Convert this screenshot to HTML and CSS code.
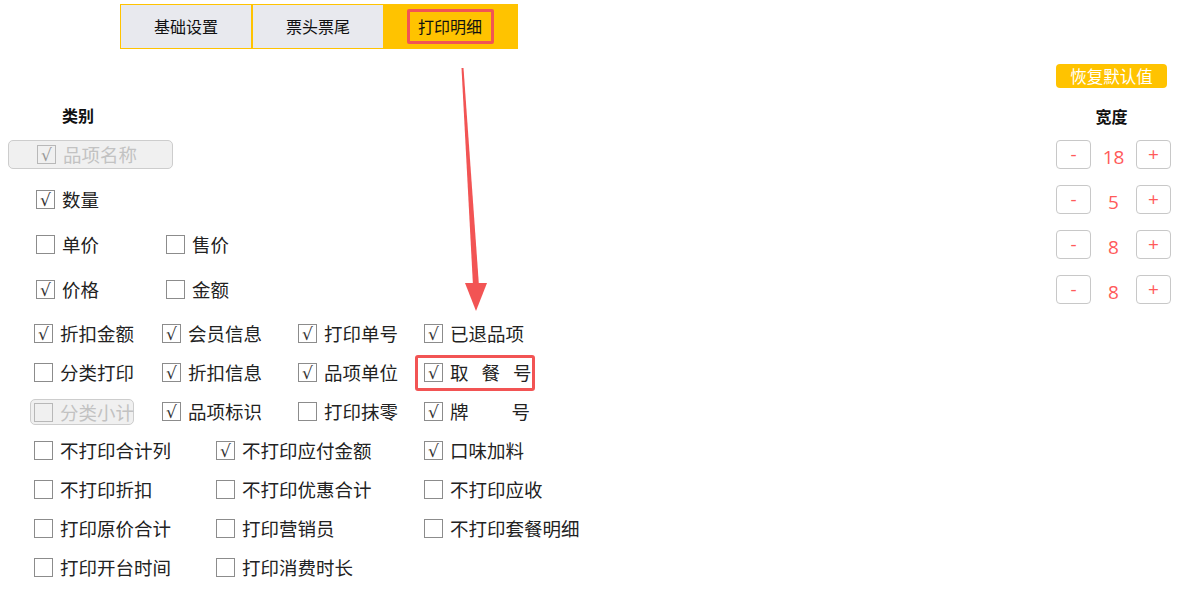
FILE: index.html
```html
<!DOCTYPE html>
<html>
<head>
<meta charset="UTF-8">
<title>打印明细</title>
<link rel="stylesheet" href="styles.css">
</head>
<body>
<div class="tabs">
	<a class="tab" href="javascript:;">基础设置</a>
	<a class="tab" href="javascript:;">票头票尾</a>
	<a class="tab on" href="javascript:;"><span class="mark">打印明细</span></a>
</div>
<div class="main">
	<div class="left">
		<div class="head">类别</div>
		<div class="row big">
			<label class="item locked first"><i class="ck">√</i>品项名称</label>
		</div>
		<div class="row big">
			<label class="item w130"><i class="ck">√</i>数量</label>
		</div>
		<div class="row big">
			<label class="item w130"><i class="ck"></i>单价</label>
			<label class="item w130"><i class="ck"></i>售价</label>
		</div>
		<div class="row big">
			<label class="item w130"><i class="ck">√</i>价格</label>
			<label class="item w130"><i class="ck"></i>金额</label>
		</div>
		<div class="row small top">
			<label class="item c1"><i class="ck">√</i>折扣金额</label>
			<label class="item c2"><i class="ck">√</i>会员信息</label>
			<label class="item c3"><i class="ck">√</i>打印单号</label>
			<label class="item c4"><i class="ck">√</i>已退品项</label>
		</div>
		<div class="row small">
			<label class="item c1"><i class="ck"></i>分类打印</label>
			<label class="item c2"><i class="ck">√</i>折扣信息</label>
			<label class="item c3"><i class="ck">√</i>品项单位</label>
			<label class="item c4 hot"><i class="ck">√</i><span class="sp1">取餐号</span></label>
		</div>
		<div class="row small">
			<label class="item c1 locked sub"><i class="ck"></i>分类小计</label>
			<label class="item c2"><i class="ck">√</i>品项标识</label>
			<label class="item c3"><i class="ck"></i>打印抹零</label>
			<label class="item c4"><i class="ck">√</i><span class="sp2">牌号</span></label>
		</div>
		<div class="row small">
			<label class="item d1"><i class="ck"></i>不打印合计列</label>
			<label class="item d2"><i class="ck">√</i>不打印应付金额</label>
			<label class="item"><i class="ck">√</i>口味加料</label>
		</div>
		<div class="row small">
			<label class="item d1"><i class="ck"></i>不打印折扣</label>
			<label class="item d2"><i class="ck"></i>不打印优惠合计</label>
			<label class="item"><i class="ck"></i>不打印应收</label>
		</div>
		<div class="row small">
			<label class="item d1"><i class="ck"></i>打印原价合计</label>
			<label class="item d2"><i class="ck"></i>打印营销员</label>
			<label class="item"><i class="ck"></i>不打印套餐明细</label>
		</div>
		<div class="row small">
			<label class="item d1"><i class="ck"></i>打印开台时间</label>
			<label class="item d2"><i class="ck"></i>打印消费时长</label>
		</div>
	</div>
	<div class="right">
		<a class="reset" href="javascript:;">恢复默认值</a>
		<div class="head">宽度</div>
		<div class="step"><a class="btn" href="javascript:;">-</a><span class="num">18</span><a class="btn" href="javascript:;">+</a></div>
		<div class="step"><a class="btn" href="javascript:;">-</a><span class="num">5</span><a class="btn" href="javascript:;">+</a></div>
		<div class="step"><a class="btn" href="javascript:;">-</a><span class="num">8</span><a class="btn" href="javascript:;">+</a></div>
		<div class="step"><a class="btn" href="javascript:;">-</a><span class="num">8</span><a class="btn" href="javascript:;">+</a></div>
	</div>
</div>
<!-- 标注箭头 -->
<svg class="arrow" width="1184" height="598" viewBox="0 0 1184 598">
	<polygon points="461.5,68 463.5,68 479,286 473,286" fill="#f25454"/>
	<polygon points="465,283 487,283 476,311" fill="#f25454"/>
</svg>
</body>
</html>
```

FILE: styles.css
```css
*{margin: 0;padding: 0;box-sizing: border-box;}
a{text-decoration: none;color: inherit;}
body{
	width: 1184px;
	height: 598px;
	overflow: hidden;
	background: #fff;
	font-family: "Noto Sans CJK SC", "Microsoft YaHei", sans-serif;
	color: #222;
	position: relative;
}
/* 顶部页签 */
.tabs{
	display: flex;
	margin: 4px 0 0 120px;
	width: 398px;
	height: 45px;
	padding: 1px;
	background: #ffc300;
	gap: 2px;
}
.tab{
	width: 130px;
	display: flex;
	align-items: center;
	justify-content: center;
	background: #e8e9ee;
	font-size: 16px;
	line-height: 1;
	color: #111;
	padding-bottom: 2px;
}
.tab.on{
	flex: 1;
	background: #ffc300;
	padding-bottom: 0;
}
.tab .mark{
	width: 87px;
	height: 35px;
	border: 3px solid #f25454;
	border-radius: 2px;
	display: flex;
	align-items: center;
	justify-content: center;
	margin-left: -2px;
	padding-bottom: 2px;
}
.main{
	display: flex;
}
.left{
	flex: 1;
	padding-top: 49px;
}
.head{
	height: 33px;
	display: flex;
	align-items: center;
	font-size: 16px;
	line-height: 1;
	font-weight: bold;
	color: #111;
}
.left .head{padding-left: 62px;height: 34px;}
.row{
	display: flex;
	align-items: center;
}
.row.big{height: 45px;padding-left: 36px;}
.row.small{height: 39px;padding-left: 34px;}
.row.small.top{height: 41px;padding-top: 1px;}
.item{
	display: flex;
	align-items: center;
	font-size: 18.5px;
	line-height: 1;
	color: #222;
	white-space: nowrap;
}
.ck{
	flex-shrink: 0;
	width: 19px;
	height: 19px;
	border: 1px solid #8c8c8c;
	margin-right: 7px;
	display: flex;
	align-items: center;
	justify-content: center;
	font-style: normal;
	font-family: "DejaVu Sans", sans-serif;
	font-size: 17px;
	line-height: 1;
	color: #333;
	background: #fff;
	padding-top: 2px;
}
.w130{width: 130px;}
.c1{width: 128px;}
.c2{width: 136px;}
.c3{width: 126px;}
.d1{width: 182px;}
.d2{width: 208px;}
/* 不可修改项 */
.locked{
	color: #c2c2c2;
	background: #f0f0f0;
	border: 1px solid #cdcdcd;
	border-radius: 5px;
}
.locked .ck{
	border-color: #b8b8b8;
	color: #999;
	background: #f0f0f0;
}
.locked.first{
	width: 165px;
	height: 29px;
	margin-left: -28px;
	padding-left: 28px;
}
.locked.sub{
	width: 104px;
	height: 26px;
	margin: 1px 28px 0 -4px;
	padding-left: 3px;
}
.hot{
	width: 120px;
	height: 36px;
	margin-left: -9px;
	padding-left: 6px;
	border: 3px solid #f25454;
	border-radius: 3px;
}
.sp1{flex-shrink: 0;letter-spacing: 13px;}
.sp2{flex-shrink: 0;letter-spacing: 43px;}
/* 右侧宽度 */
.right{
	width: 115px;
	margin-right: 13px;
	padding-top: 15px;
}
.reset{
	display: block;
	width: 111px;
	height: 24px;
	line-height: 24px;
	text-align: center;
	background: #ffc300;
	color: #fff;
	font-size: 16.5px;
	border-radius: 4px;
	margin-bottom: 11px;
}
.right .head{justify-content: center;padding-right: 4px;}
.step{
	height: 45px;
	display: flex;
	align-items: center;
	justify-content: space-between;
}
.btn{
	width: 35px;
	height: 29px;
	border: 1px solid #c8c8c8;
	border-radius: 4px;
	display: flex;
	align-items: center;
	justify-content: center;
	color: #ff5a5a;
	font-size: 19px;
	font-family: "Open Sans", sans-serif;
	padding-bottom: 2px;
}
.num{
	color: #ff5a5a;
	font-size: 19px;
	font-family: "Open Sans", sans-serif;
	padding-top: 4px;
}
.arrow{
	position: absolute;
	left: 0;
	top: 0;
	pointer-events: none;
}
```
